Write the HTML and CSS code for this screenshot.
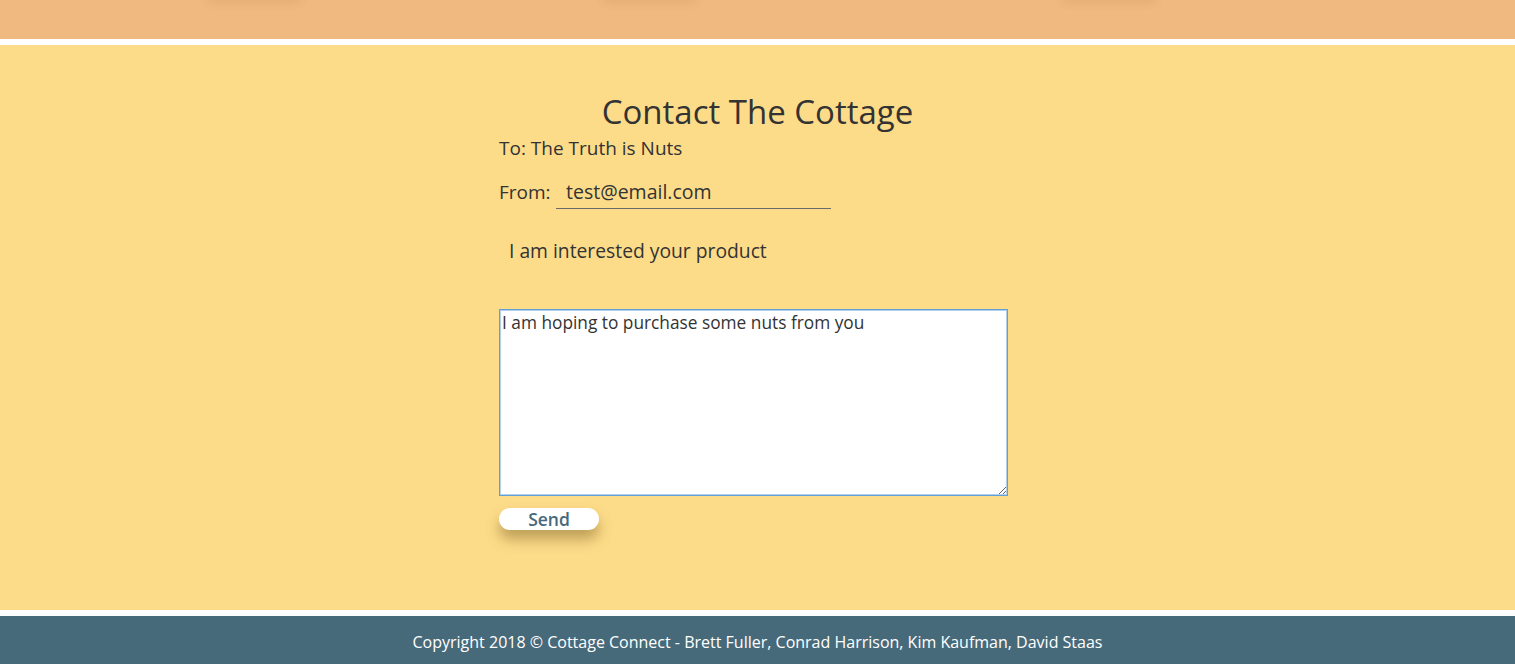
FILE: index.html
```html
<!DOCTYPE html>
<html>
<head>
<meta charset="utf-8">
<title>Contact The Cottage</title>
<link rel="stylesheet" href="styles.css">
</head>
<body>
<header class="topbar">
  <div class="nav">
    <span class="nav-item n1"></span>
    <span class="nav-item n2"></span>
    <span class="nav-item n3"></span>
  </div>
</header>
<main class="content">
  <h1 class="title">Contact The Cottage</h1>
  <form class="mail">
    <div class="to">To: The Truth is Nuts</div>
    <div class="from-row">
      <label class="from-label">From:</label>
      <input class="from-input" type="text" value="test@email.com">
    </div>
    <input class="subject" type="text" value="I am interested your product">
    <textarea class="body">I am hoping to purchase some nuts from you</textarea>
    <button class="send" type="button">Send</button>
  </form>
</main>
<footer class="foot">Copyright 2018 © Cottage Connect - Brett Fuller, Conrad Harrison, Kim Kaufman, David Staas</footer>
</body>
</html>
```

FILE: styles.css
```css
* { box-sizing: border-box; }
html, body { margin: 0; padding: 0; }
body {
  background: #ffffff;
  font-family: "Open Sans", "DejaVu Sans", sans-serif;
  color: #333333;
  height: 664px;
  overflow: hidden;
}
.topbar {
  height: 39px;
  background: #f0b97f;
  overflow: hidden;
}
.nav {
  display: flex;
  height: 10px;
  margin-top: -12px;
}
.nav-item {
  display: block;
  height: 10px;
  width: 95px;
  border-radius: 10px;
  box-shadow: 0 5px 9px rgba(120, 80, 20, 0.1);
}
.n1 { margin-left: 207px; }
.n2 { margin-left: 300px; }
.n3 { margin-left: 365px; }
.content {
  margin-top: 6px;
  height: 565px;
  background: #fddc89;
  padding-top: 47px;
}
.title {
  margin: 0;
  text-align: center;
  font-weight: 400;
  font-size: 33px;
  line-height: 40px;
  color: #333333;
}
.mail {
  width: 517px;
  margin: 4px auto 0;
  display: flex;
  flex-direction: column;
  align-items: flex-start;
}
.to {
  font-size: 19px;
  line-height: 24px;
  height: 24px;
}
.from-row {
  display: flex;
  align-items: center;
  height: 34px;
  margin-top: 15px;
  font-size: 19px;
}
.from-label { width: 57px; }
.from-input {
  width: 275px;
  height: 34px;
  border: 0;
  border-bottom: 1px solid #6b6b6b;
  background: transparent;
  font: inherit;
  font-size: 19.5px;
  color: #333333;
  padding: 0 10px;
  outline: none;
}
.subject {
  margin-top: 24px;
  width: 320px;
  height: 34px;
  border: 0;
  background: transparent;
  font-family: inherit;
  font-size: 19.3px;
  color: #333333;
  padding: 0 10px;
  outline: none;
}
.body {
  margin-top: 42px;
  width: 509px;
  height: 187px;
  border: 1px solid #5fa0d6;
  box-shadow: 0 0 0 1px rgba(111, 170, 222, 0.55) inset;
  background: #ffffff;
  font-family: inherit;
  font-size: 17.3px;
  line-height: 22px;
  color: #333333;
  padding: 2px;
  outline: none;
}
.send {
  margin-top: 12px;
  width: 100px;
  height: 22px;
  border: 0;
  border-radius: 11px;
  background: #ffffff;
  color: #476a7b;
  font-family: inherit;
  font-weight: 600;
  font-size: 17.5px;
  line-height: 22px;
  padding: 0;
  box-shadow: 0 9px 14px rgba(100, 75, 20, 0.42);
}
.foot {
  margin-top: 6px;
  height: 48px;
  background: #476a7b;
  color: #ffffff;
  font-size: 16px;
  text-align: center;
  line-height: 52px;
}
```
